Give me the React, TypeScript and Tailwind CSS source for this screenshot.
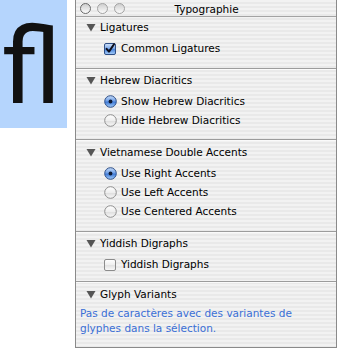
import React, { useId } from "react";

const FONT = { fontFamily: '"DejaVu Sans", "Lucida Grande", sans-serif' };

function Triangle() {
  return (
    <svg width="10" height="9" viewBox="0 0 10 9" className="shrink-0">
      <polygon points="0.5,1 9.5,1 5,8.5" fill="#555555" />
    </svg>
  );
}

function Checkbox({ checked }: { checked: boolean }) {
  const id = useId().replace(/:/g, "");
  return (
    <svg width="12" height="12" viewBox="0 0 12 12" className="shrink-0 overflow-visible">
      <defs>
        <linearGradient id={`cb${id}`} x1="0" y1="0" x2="0" y2="1">
          {checked ? (
            <>
              <stop offset="0" stopColor="#d4e4fa" />
              <stop offset="0.45" stopColor="#7eaaea" />
              <stop offset="0.55" stopColor="#4d86db" />
              <stop offset="1" stopColor="#a9d0fb" />
            </>
          ) : (
            <>
              <stop offset="0" stopColor="#ffffff" />
              <stop offset="0.5" stopColor="#efefef" />
              <stop offset="0.55" stopColor="#e2e2e2" />
              <stop offset="1" stopColor="#fbfbfb" />
            </>
          )}
        </linearGradient>
      </defs>
      <rect
        x="0.5"
        y="0.5"
        width="11"
        height="11"
        rx="1.5"
        fill={`url(#cb${id})`}
        stroke={checked ? "#2f4f86" : "#8c8c8c"}
      />
      {checked && (
        <path
          d="M2.6 5.8 L5 8.6 L10 1.2"
          fill="none"
          stroke="#0d0d1a"
          strokeWidth="2"
          strokeLinecap="round"
          strokeLinejoin="round"
        />
      )}
    </svg>
  );
}

function Radio({ checked }: { checked: boolean }) {
  const id = useId().replace(/:/g, "");
  return (
    <svg width="13" height="13" viewBox="0 0 13 13" className="shrink-0">
      <defs>
        <linearGradient id={`rd${id}`} x1="0" y1="0" x2="0" y2="1">
          {checked ? (
            <>
              <stop offset="0" stopColor="#c9defa" />
              <stop offset="0.45" stopColor="#6f9fe6" />
              <stop offset="0.55" stopColor="#3f7ad6" />
              <stop offset="1" stopColor="#a6cffb" />
            </>
          ) : (
            <>
              <stop offset="0" stopColor="#ffffff" />
              <stop offset="0.5" stopColor="#eeeeee" />
              <stop offset="0.55" stopColor="#dedede" />
              <stop offset="1" stopColor="#fafafa" />
            </>
          )}
        </linearGradient>
      </defs>
      <circle
        cx="6.5"
        cy="6.5"
        r="5.8"
        fill={`url(#rd${id})`}
        stroke={checked ? "#2f5089" : "#8e8e8e"}
        strokeWidth="1"
      />
      {checked && <circle cx="6.5" cy="6.5" r="1.9" fill="#0f1a33" />}
    </svg>
  );
}

function Heading({ label }: { label: string }) {
  return (
    <div className="flex h-[20px] items-center gap-[4px] pl-[10px]">
      <Triangle />
      <span className="text-[10.5px] leading-none text-black">{label}</span>
    </div>
  );
}

function Option({
  kind,
  checked,
  label,
}: {
  kind: "check" | "radio";
  checked: boolean;
  label: string;
}) {
  return (
    <div className="flex h-[19px] items-center pl-[28px]">
      <div className="flex w-[17px] items-center">
        {kind === "check" ? <Checkbox checked={checked} /> : <Radio checked={checked} />}
      </div>
      <span className="text-[10.5px] leading-none text-black">{label}</span>
    </div>
  );
}

function Separator() {
  return (
    <div className="flex flex-col">
      <div className="h-px bg-[#9c9c9c]" />
      <div className="h-px bg-[#fafafa]" />
    </div>
  );
}

function TrafficLight({ dark }: { dark?: boolean }) {
  return (
    <div
      className={`h-[11px] w-[11px] rounded-full border bg-gradient-to-b from-[#cfcfcf] to-[#fbfbfb] ${
        dark ? "border-[#6a6a6a]" : "border-[#a2a2a2]"
      }`}
    />
  );
}

export default function App() {
  return (
    <div className="flex h-[349px] w-[337px] items-start bg-white" style={FONT}>
      <div className="h-[128px] w-[67px] shrink-0 overflow-hidden bg-[#b5d5fd] pl-[1px] pt-[14px]">
        <div
          className="text-[106px] leading-[106px] text-[#111]"
          style={{ fontFamily: 'Roboto, "DejaVu Sans", sans-serif' }}
        >
          ﬂ
        </div>
      </div>
      <div className="ml-[8px] flex h-[348px] w-[262px] flex-col border-x border-b border-[#8a8a8a] bg-[image:repeating-linear-gradient(180deg,#f2f2f2_0px,#f2f2f2_2px,#e9e9e9_2px,#e9e9e9_4px)]">
        <div className="flex h-[17px] items-center border-b border-[#a3a3a3]">
          <div className="flex items-center gap-[6px] pl-[4px]">
            <TrafficLight dark />
            <TrafficLight />
            <TrafficLight />
          </div>
          <div className="flex-1 pr-[48px] pt-[2px] text-center text-[10.5px] leading-none text-black">
            Typographie
          </div>
        </div>

        <div className="flex flex-col pb-[10px]">
          <Heading label="Ligatures" />
          <div className="pt-[2px]">
            <Option kind="check" checked label="Common Ligatures" />
          </div>
        </div>
        <Separator />

        <div className="flex flex-col pb-[9px]">
          <Heading label="Hebrew Diacritics" />
          <div className="pt-[2px]">
            <Option kind="radio" checked label="Show Hebrew Diacritics" />
            <Option kind="radio" checked={false} label="Hide Hebrew Diacritics" />
          </div>
        </div>
        <Separator />

        <div className="flex flex-col pb-[10px] pt-[1px]">
          <Heading label="Vietnamese Double Accents" />
          <div className="pt-[2px]">
            <Option kind="radio" checked label="Use Right Accents" />
            <Option kind="radio" checked={false} label="Use Left Accents" />
            <Option kind="radio" checked={false} label="Use Centered Accents" />
          </div>
        </div>
        <Separator />

        <div className="flex flex-col pb-[7px]">
          <Heading label="Yiddish Digraphs" />
          <div className="pt-[2px]">
            <Option kind="check" checked={false} label="Yiddish Digraphs" />
          </div>
        </div>
        <Separator />

        <div className="flex flex-col pt-[1px]">
          <Heading label="Glyph Variants" />
          <p className="w-[235px] pl-[4px] pt-[2px] text-[10.5px] leading-[15px] text-[#3a6fd6]">
            Pas de caractères avec des variantes de glyphes dans la sélection.
          </p>
        </div>
      </div>
    </div>
  );
}
